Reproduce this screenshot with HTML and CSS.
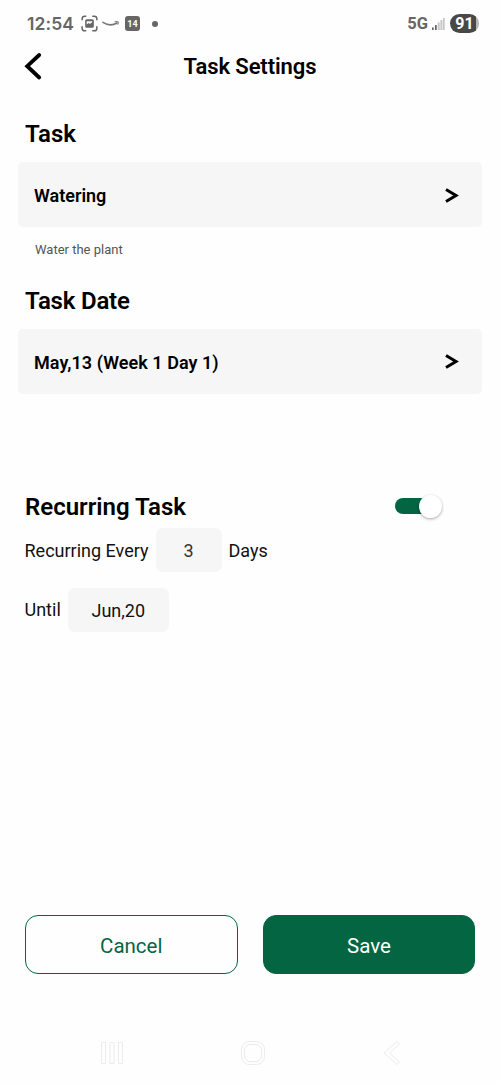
FILE: index.html
```html
<!DOCTYPE html>
<html lang="en">
<head>
<meta charset="utf-8">
<title>Task Settings</title>
<link rel="stylesheet" href="styles.css">
</head>
<body>
<div class="screen">
  <div class="status">
    <span class="clock">12:54</span>
    <svg class="capture" width="17" height="17" viewBox="0 0 18 18" fill="none" stroke="#666" stroke-width="1.6" stroke-linecap="round">
      <path d="M1.2 5V4Q1.2 1.2 4 1.2H5M12.500 1.200H14Q16.800 1.200 16.800 4V5M16.800 12.500V14Q16.800 16.800 14 16.800H12.500M5 16.800H4Q1.200 16.800 1.200 14V12.500"/>
      <path fill="#666" fill-rule="evenodd" stroke="none" d="M6 4.500H12Q13.600 4.500 13.600 6.100V11.900Q13.600 13.500 12 13.500H6Q4.400 13.500 4.400 11.900V6.100Q4.400 4.500 6 4.500ZM6 6.500V10L8 8.600 9.500 9.400 12 7.400V6.500Z"/>
    </svg>
    <svg class="smile" width="18" height="8" viewBox="0 0 18 8" fill="none" stroke="#777" stroke-linecap="round">
      <path stroke-width="1.600" d="M1 2.300Q8 7 15 3"/><path stroke-width="1.100" d="M13 1.800Q17.600 .6 15.800 4.300"/>
    </svg>
    <span class="calendar">14</span>
    <span class="dot"></span>
    <span class="network">5G</span>
    <svg class="signal" width="14" height="14" viewBox="0 0 14 14">
      <path fill="#666" d="M1 10.500h1.700V13H1zM4 8h1.700v5H4z"/><path fill="#c6c6c6" d="M6.700 5.500h2V13h-2zM9.400 3h2v10h-2zM12 1h1.700v12H12z"/>
    </svg>
    <span class="battery">91</span>
  </div>
  <header class="header">
    <svg class="back" width="20" height="30" viewBox="0 0 20 30" fill="none" stroke="#000" stroke-width="3.800" stroke-linecap="round"><path d="M15.200 3 3.200 14.200 15.200 25.500"/></svg>
    <h1 class="title">Task Settings</h1>
  </header>
  <main class="content">
    <h2 class="heading">Task</h2>
    <div class="card"><span>Watering</span>
      <svg width="16" height="18" viewBox="0 0 16 18" fill="none" stroke="#000" stroke-width="3"><path d="M2 2.500 12 8.500 2 14.500"/></svg>
    </div>
    <p class="caption">Water the plant</p>
    <h2 class="heading tight">Task Date</h2>
    <div class="card date"><span>May,13 (Week 1 Day 1)</span>
      <svg width="16" height="18" viewBox="0 0 16 18" fill="none" stroke="#000" stroke-width="3"><path d="M2 2.500 12 8.500 2 14.500"/></svg>
    </div>
    <div class="recurring">
      <h2 class="heading">Recurring Task</h2>
      <div class="switch"><div class="track"></div><div class="thumb"></div></div>
    </div>
    <div class="row"><span class="every">Recurring Every</span><span class="field count">3</span><span>Days</span></div>
    <div class="row until"><span>Until</span><span class="field day">Jun,20</span></div>
  </main>
  <div class="actions">
    <button class="button cancel">Cancel</button>
    <button class="button save">Save</button>
  </div>
  <nav class="nav">
    <svg width="24" height="24" viewBox="0 0 24 24" fill="none" stroke="#ececec"><path d="M1.500 1.500h4v21h-4zM10 1.500h4v21h-4zM18.500 1.500h4v21h-4z"/></svg>
    <svg width="26" height="26" viewBox="0 0 26 26" fill="none" stroke="#ececec"><rect x="1.500" y="1.500" width="23" height="23" rx="8"/><rect x="4.500" y="4.500" width="17" height="17" rx="5.500"/></svg>
    <svg width="20" height="26" viewBox="0 0 20 26" fill="none" stroke="#ececec" stroke-linejoin="round"><path d="M15 1.500 2 13 15 24.500 17.500 22 7.500 13 17.500 4Z"/></svg>
  </nav>
</div>
</body>
</html>
```
FILE: styles.css
```css
* { box-sizing: border-box; }
body { margin: 0; background: #fff; color: #000; font-family: Roboto, "Liberation Sans", sans-serif; }
h1, h2, p { margin: 0; }
svg { display: block; flex: none; }
.screen { width: 500px; height: 1084px; display: flex; flex-direction: column; background: #fefefe; overflow: hidden; }

.status { height: 47px; padding: 0 21px 0 27px; display: flex; align-items: center; color: #666; flex: none; }
.clock { width: 54px; font: 600 17.500px/20px Inter, sans-serif; letter-spacing: .1px; }
.smile { margin-left: 4px; }
.calendar { width: 15px; height: 15px; margin-left: 5px; border-radius: 3px; background: #666; color: #fff; font: 700 9px/16px Roboto, sans-serif; text-align: center; }
.dot { width: 6px; height: 6px; margin-left: 12px; border-radius: 50%; background: #666; }
.network { margin-left: auto; font: 700 16.500px/20px Roboto, sans-serif; }
.signal { margin: 0 5px 0 3px; }
.battery { width: 29px; height: 19px; border-radius: 10px; background: linear-gradient(90deg, #484848 91%, #b5b5b5 91%); color: #fff; font: 700 16px/20px Roboto, sans-serif; text-align: center; }

.header { height: 39px; display: grid; grid-template-columns: 64px 1fr 64px; align-items: center; flex: none; }
.back { margin-left: 24px; }
.title { font-size: 22px; line-height: 28px; font-weight: 600; letter-spacing: -.1px; text-align: center; }

.content { padding: 33px 18px 0; flex: 1; }
.heading { padding: 1px 0 0 7px; font-size: 24px; line-height: 29px; font-weight: 600; }
.tight { letter-spacing: -.2px; }
.card { height: 65px; margin-top: 13px; padding: 2px 22px 0 16px; display: flex; align-items: center; justify-content: space-between; border-radius: 5px; background: #f6f6f6; font-size: 18px; font-weight: 600; }
.date { padding-top: 1px; letter-spacing: .05px; }
.caption { padding-left: 17px; margin: 13px 0 26px; color: #555; font-size: 13px; line-height: 20px; }
.recurring { margin-top: 98px; display: flex; justify-content: space-between; align-items: center; }
.switch { width: 47px; height: 24px; margin: 0 40px 2px 0; display: flex; align-items: center; }
.track { width: 37px; height: 16px; border-radius: 8px; background: #046543; }
.thumb { width: 23px; height: 23px; margin-left: -13px; border-radius: 50%; background: #fff; box-shadow: 0 1px 3px rgba(0,0,0,.35); }
.row { height: 44px; margin-top: 6px; padding-left: 6.500px; display: flex; align-items: center; gap: 7px; font-size: 18px; color: #111; }
.until { margin-top: 15px; padding-top: 1px; }
.field { height: 44px; line-height: 45px; border-radius: 7px; background: #f6f6f6; text-align: center; }
.count { width: 66px; color: #333; }
.day { width: 101px; }

.actions { padding: 0 25px 0 24.500px; display: grid; grid-template-columns: 213.500px 212px; gap: 25px; flex: none; }
.button { height: 59px; padding: 2px 0 0; border: 1px solid #046543; border-radius: 13px; font: 400 20.500px/24px Roboto, sans-serif; }
.cancel { background: #fefefe; color: #046543; }
.save { background: #046543; color: #fff; }
.nav { height: 62px; margin-top: 48px; padding: 0 98px 0 100px; display: flex; align-items: center; justify-content: space-between; flex: none; }
```
